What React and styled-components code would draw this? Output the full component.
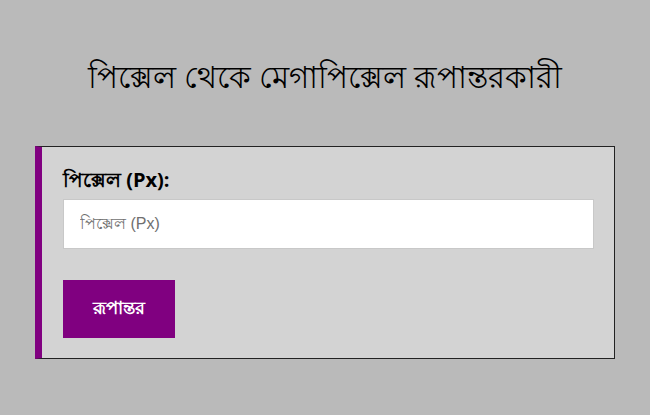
import React from "react";
import styled, { createGlobalStyle } from "styled-components";

const GlobalStyle = createGlobalStyle`
  html, body { margin: 0; padding: 0; }
  body {
    background: #bababa;
    font-family: "Open Sans", "Noto Sans", "DejaVu Sans", sans-serif;
    color: #000;
  }
`;

const Page = styled.div`
  width: 650px;
  height: 415px;
  display: flex;
  flex-direction: column;
  align-items: center;
  box-sizing: border-box;
  padding-top: 52px;
`;

const Title = styled.h1`
  margin: 0;
  font-size: 31px;
  font-weight: 400;
  line-height: 48px;
  text-align: center;
`;

const Card = styled.div`
  margin-top: 46px;
  width: 580px;
  box-sizing: border-box;
  background: #d3d3d3;
  border: 1px solid #222;
  border-left: 7px solid #800080;
  padding: 20px 20px 20px 21px;
  display: flex;
  flex-direction: column;
  align-items: flex-start;
`;

const Label = styled.label`
  font-size: 20px;
  font-weight: 700;
  line-height: 26px;
  margin-bottom: 6px;
`;

const Input = styled.input`
  width: 100%;
  height: 50px;
  box-sizing: border-box;
  border: 1px solid #c8c8c8;
  background: #fff;
  padding: 0 16px;
  font-size: 16px;
  font-family: "Liberation Sans", "Noto Sans", Arial, sans-serif;
  outline: none;
  &::placeholder { color: #6f6f6f; }
`;

const Button = styled.button`
  margin-top: 31px;
  width: 112px;
  height: 58px;
  border: none;
  background: #800080;
  color: #fff;
  font-family: inherit;
  font-size: 18px;
  font-weight: 700;
  cursor: pointer;
`;

export default function App() {
  return (
    <>
      <GlobalStyle />
      <Page>
        <Title>পিক্সেল থেকে মেগাপিক্সেল রূপান্তরকারী</Title>
        <Card>
          <Label htmlFor="px">পিক্সেল (Px):</Label>
          <Input id="px" type="number" placeholder="পিক্সেল (Px)" />
          <Button>রূপান্তর</Button>
        </Card>
      </Page>
    </>
  );
}
